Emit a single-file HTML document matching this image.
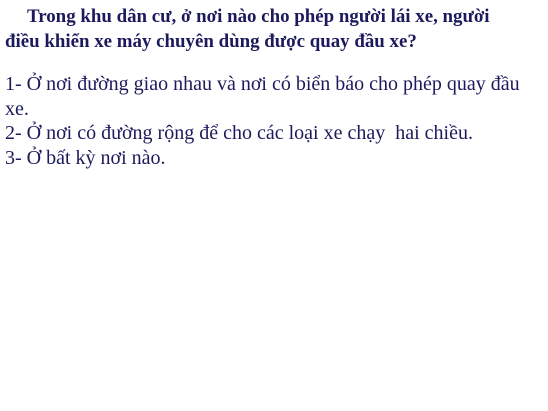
<!DOCTYPE html>
<html><head><meta charset="utf-8"><style>
html,body{margin:0;padding:0;background:#fff;width:548px;height:411px;overflow:hidden}
.l{position:absolute;white-space:nowrap;font-family:"Liberation Serif",serif;color:#1b1a5c;font-size:20px;line-height:24px}
.b{font-weight:bold;font-size:18.9px}
</style></head><body>
<div class="l b" style="left:27px;top:5px">Trong khu dân cư, ở nơi nào cho phép người lái xe, người</div>
<div class="l b" style="left:5px;top:30px">điều khiển xe máy chuyên dùng được quay đầu xe?</div>
<div class="l" style="left:5px;top:72px">1- Ở nơi đường giao nhau và nơi có biển báo cho phép quay đầu</div>
<div class="l" style="left:5px;top:97px">xe.</div>
<div class="l" style="left:5px;top:121px">2- Ở nơi có đường rộng để cho các loại xe chạy&nbsp; hai chiều.</div>
<div class="l" style="left:5px;top:146px">3- Ở bất kỳ nơi nào.</div>
</body></html>
